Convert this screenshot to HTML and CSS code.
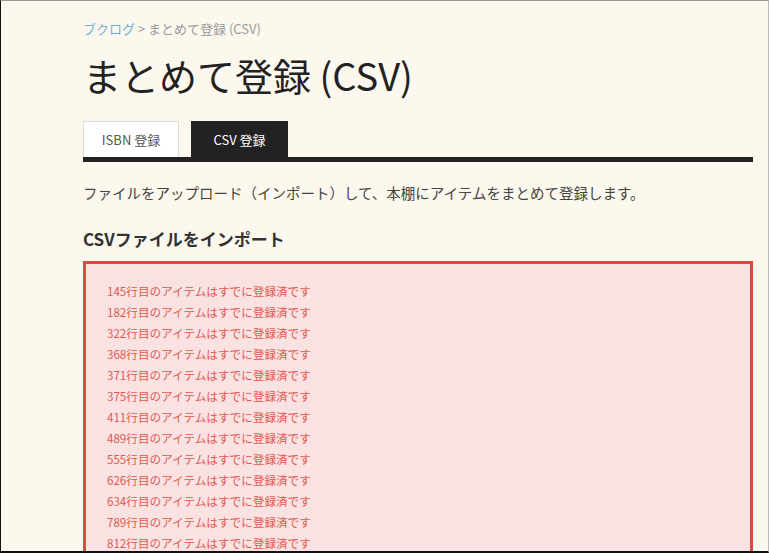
FILE: index.html
```html
<!DOCTYPE html>
<html lang="ja">
<head>
<meta charset="utf-8">
<title>まとめて登録 (CSV)</title>
<link rel="stylesheet" href="styles.css">
</head>
<body>
<div class="page">
  <div class="breadcrumb"><a class="crumb-link" href="#">ブクログ</a> <span class="sep">&gt;</span> まとめて登録 (CSV)</div>
  <h1 class="title">まとめて登録 (CSV)</h1>
  <div class="tabs">
    <a class="tab" href="#">ISBN 登録</a>
    <a class="tab tab-active" href="#">CSV 登録</a>
  </div>
  <p class="desc">ファイルをアップロード（インポート）して、本棚にアイテムをまとめて登録します。</p>
  <h2 class="section-title">CSVファイルをインポート</h2>
  <div class="error-box">
    <p class="error-line">145行目のアイテムはすでに登録済です</p>
    <p class="error-line">182行目のアイテムはすでに登録済です</p>
    <p class="error-line">322行目のアイテムはすでに登録済です</p>
    <p class="error-line">368行目のアイテムはすでに登録済です</p>
    <p class="error-line">371行目のアイテムはすでに登録済です</p>
    <p class="error-line">375行目のアイテムはすでに登録済です</p>
    <p class="error-line">411行目のアイテムはすでに登録済です</p>
    <p class="error-line">489行目のアイテムはすでに登録済です</p>
    <p class="error-line">555行目のアイテムはすでに登録済です</p>
    <p class="error-line">626行目のアイテムはすでに登録済です</p>
    <p class="error-line">634行目のアイテムはすでに登録済です</p>
    <p class="error-line">789行目のアイテムはすでに登録済です</p>
    <p class="error-line">812行目のアイテムはすでに登録済です</p>
  </div>
</div>
</body>
</html>
```

FILE: styles.css
```css
html, body {
  margin: 0;
  padding: 0;
  background: #fbf7ec;
}
body {
  font-family: "Noto Sans CJK JP", "Noto Sans", sans-serif;
  color: #333;
}
.page {
  box-sizing: border-box;
  width: 769px;
  height: 553px;
  overflow: hidden;
  border: 1px solid #111;
  border-top-color: #999;
  border-right-color: #bbb;
  border-bottom-width: 2px;
  background: #fcf8ee;
  padding: 18px 15px 0 82px;
}
.breadcrumb {
  font-size: 13px;
  line-height: 20px;
  color: #999;
}
.crumb-link {
  color: #6fb0d6;
  text-decoration: none;
}
.sep {
  color: #999;
}
.title {
  margin: 13px 0 0;
  font-size: 38px;
  line-height: 46px;
  font-weight: 400;
  color: #222;
}
.tabs {
  display: flex;
  gap: 12px;
  margin-top: 23px;
  border-bottom: 5px solid #222;
}
.tab {
  display: flex;
  align-items: center;
  justify-content: center;
  height: 36px;
  box-sizing: border-box;
  font-size: 13px;
  text-decoration: none;
  color: #555;
}
.tab:first-child {
  width: 96px;
  background: #fff;
  border: 1px solid #ddd;
  border-bottom: none;
}
.tab-active {
  width: 97px;
  background: #222;
  color: #fff;
}
.desc {
  margin: 20px 0 0;
  font-size: 14.5px;
  line-height: 22px;
  color: #444;
}
.section-title {
  margin: 23px 0 0;
  font-size: 17px;
  line-height: 24px;
  font-weight: 700;
  color: #333;
}
.error-box {
  margin-top: 10px;
  border: 3px solid #db4a3f;
  background: #fbe2e2;
  padding: 17px 20px 30px 21px;
}
.error-line {
  margin: 0;
  font-size: 11.6px;
  line-height: 21px;
  color: #e0584f;
}
```
